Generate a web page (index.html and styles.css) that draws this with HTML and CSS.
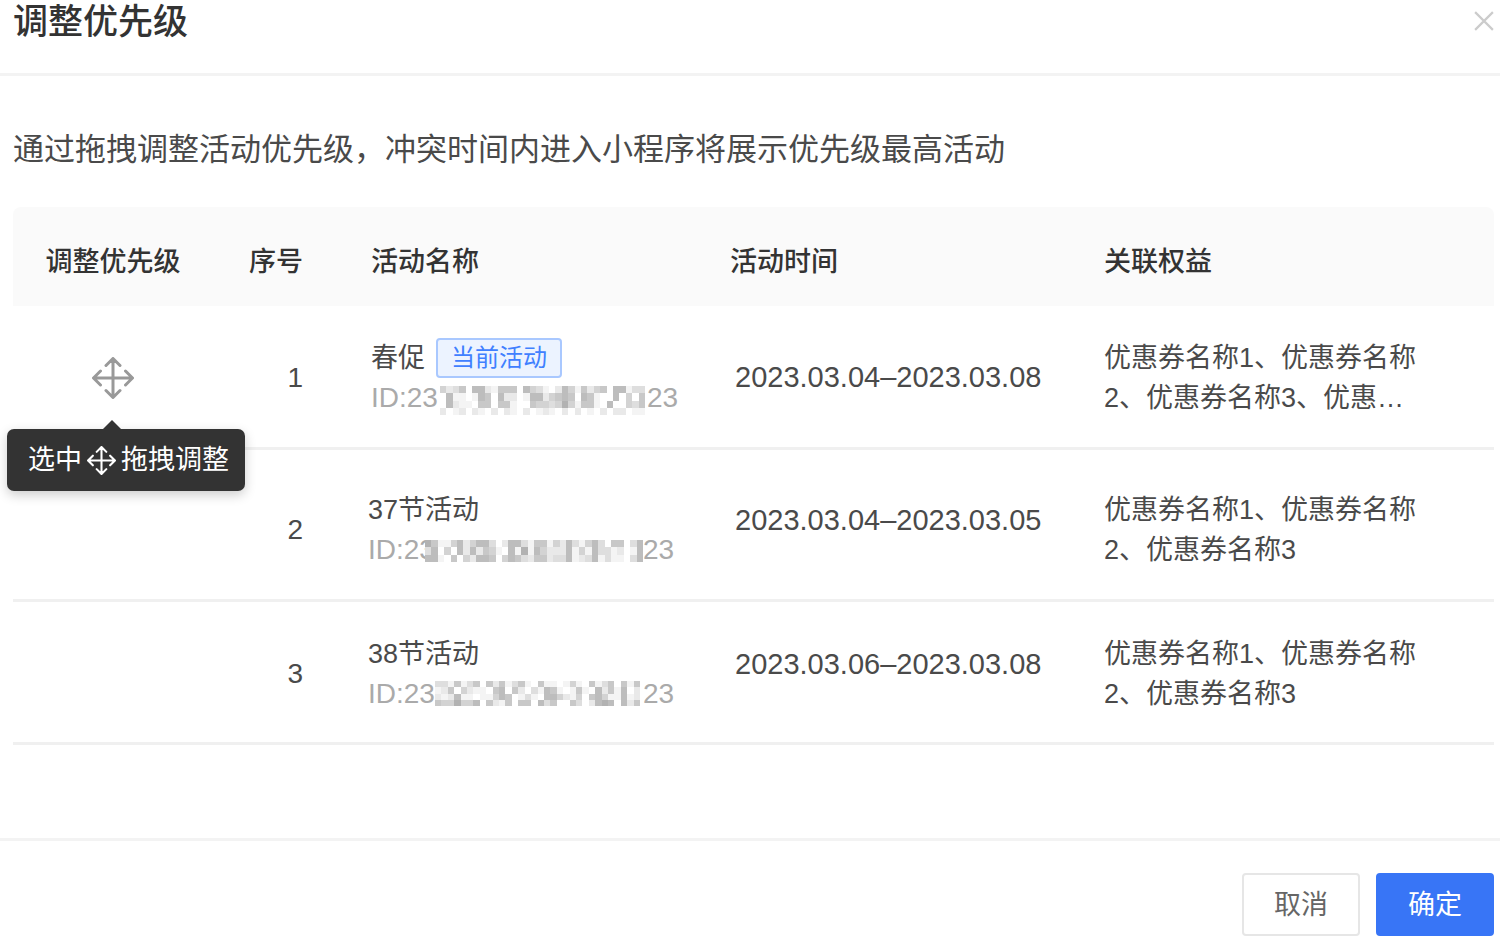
FILE: index.html
```html
<!DOCTYPE html>
<html lang="zh-CN">
<head>
<meta charset="utf-8">
<title>调整优先级</title>
<link rel="stylesheet" href="styles.css">
<script src="mosaic.js" defer></script>
</head>
<body>
<svg class="defs" aria-hidden="true">
  <symbol id="move" viewBox="0 0 42 42">
    <path d="M21 2v38M2 21h38M14 8.500l7-7 7 7M14 33.500l7 7 7-7M8.500 14l-7 7 7 7M33.500 14l7 7-7 7" fill="none" stroke="currentColor" stroke-linecap="round" stroke-linejoin="round"/>
  </symbol>
</svg>
<main class="dialog" role="dialog" aria-labelledby="title">
  <header class="dialog-header">
    <h1 id="title">调整优先级</h1>
    <button class="close" type="button" aria-label="关闭">
      <svg viewBox="0 0 18 18"><path d="M1 1l16 16M17 1L1 17" fill="none" stroke="currentColor" stroke-width="2"/></svg>
    </button>
  </header>
  <section class="dialog-body">
    <p class="hint">通过拖拽调整活动优先级，冲突时间内进入小程序将展示优先级最高活动</p>
    <table class="list">
      <colgroup><col class="c-move"><col class="c-no"><col class="c-name"><col class="c-time"><col class="c-benefit"></colgroup>
      <thead>
        <tr><th class="center" scope="col">调整优先级</th><th class="num" scope="col">序号</th><th scope="col">活动名称</th><th scope="col">活动时间</th><th scope="col">关联权益</th></tr>
      </thead>
      <tbody>
        <tr class="current">
          <td class="center">
            <div class="handle-wrap">
              <button class="handle" type="button" aria-label="拖拽调整" aria-describedby="tip"><svg><use href="#move"/></svg></button>
              <div class="tooltip" id="tip" role="tooltip">选中<svg><use href="#move"/></svg>拖拽调整</div>
            </div>
          </td>
          <td class="num">1</td>
          <td>
            <div class="name">春促<span class="tag">当前活动</span></div>
            <div class="id">ID:23<svg class="mosaic" data-rows="42350662155506431026415245066133 06110165062201662456506510060405 06211055055100544347415510600435 20120210202102012102020102022011"></svg>23</div>
          </td>
          <td class="time">2023.03.04–2023.03.08</td>
          <td class="benefit">优惠券名称1、优惠券名称<br>2、优惠券名称3、优惠…</td>
        </tr>
        <tr class="tall">
          <td></td>
          <td class="num">2</td>
          <td class="plain"><div class="name">37节活动</div><div class="id">ID:23<svg class="mosaic wide" data-rows="7511462466302663155142631463055036 3604062625410617164222614163312016 6610504266504653255233612361311036"></svg>23</div></td>
          <td class="time">2023.03.04–2023.03.05</td>
          <td class="benefit">优惠券名称1、优惠券名称<br>2、优惠券名称3</td>
        </tr>
        <tr class="last">
          <td></td>
          <td class="num">3</td>
          <td class="plain"><div class="name">38节活动</div><div class="id">ID:23<svg class="mosaic short" data-rows="33151350525135105110141051350515 12504211056052031651015106251602 21261101146501310664214056411612 54474460521505506350053026760625"></svg>23</div></td>
          <td class="time">2023.03.06–2023.03.08</td>
          <td class="benefit">优惠券名称1、优惠券名称<br>2、优惠券名称3</td>
        </tr>
      </tbody>
    </table>
  </section>
  <footer class="dialog-footer">
    <button class="btn" type="button">取消</button>
    <button class="btn primary" type="button">确定</button>
  </footer>
</main>
</body>
</html>
```
FILE: mosaic.js
```js
// Draws the mask over the middle of each ID: one digit per cell, 0 is white.
document.querySelectorAll(".mosaic").forEach((svg) => {
  const rows = svg.dataset.rows.split(" ");
  svg.setAttribute("viewBox", `0 0 ${rows[0].length} ${rows.length}`);
  svg.setAttribute("preserveAspectRatio", "none");
  svg.setAttribute("shape-rendering", "crispEdges");
  rows.forEach((row, y) => [...row].forEach((level, x) => {
    const cell = document.createElementNS("http://www.w3.org/2000/svg", "rect");
    const grey = 255 - level * 11;
    cell.setAttribute("x", x);
    cell.setAttribute("y", y);
    cell.setAttribute("width", 1);
    cell.setAttribute("height", 1);
    cell.setAttribute("fill", `rgb(${grey},${grey},${grey})`);
    svg.append(cell);
  }));
});
```
FILE: styles.css
```css
* { box-sizing: border-box; }
body { margin: 0; background: #fff; color: #4a4a4a; font-family: "Liberation Sans", "Noto Sans CJK SC", sans-serif; font-size: 27px; line-height: 40px; }
button { font: inherit; cursor: pointer; }
.defs { display: none; }
.dialog { display: flex; flex-direction: column; min-height: 100vh; }
.dialog-header { display: flex; justify-content: space-between; align-items: flex-start; height: 76px; padding: 0 6px 0 13px; border-bottom: 3px solid #f3f3f3; }
h1 { margin: 0; font-size: 35px; line-height: 44px; font-weight: 500; color: #333; }
.close { padding: 0; margin-top: 11px; border: 0; background: none; color: #ccc; line-height: 0; }
.close svg { width: 20px; height: 20px; }
.dialog-body { flex: 1; padding: 50px 6px 0 13px; }
.hint { margin: 0 0 33px; font-size: 31px; line-height: 48px; }
.list { width: 100%; table-layout: fixed; border-collapse: separate; border-spacing: 0; }
.c-move { width: 200px; }
.c-no { width: 128px; }
.c-name { width: 359px; }
.c-time { width: 374px; }
th { height: 99px; padding: 10px 0 0 30px; background: #fafafa; text-align: left; font-weight: 500; color: #333; }
th:first-child { border-top-left-radius: 8px; }
th:last-child { border-top-right-radius: 8px; }
td { height: 144px; padding: 3px 0 0 30px; border-bottom: 3px solid #f0f0f0; }
.center { text-align: center; padding-left: 0; }
.num { text-align: right; padding-left: 0; padding-right: 38px; }
td.num { font-size: 28px; }
.plain { padding-left: 27px; }
.name { display: flex; align-items: center; gap: 11px; }
.tag { padding: 0 13px; border: 2px solid #a9c8ff; border-radius: 4px; background: #ecf3ff; color: #4080ff; font-size: 24px; line-height: 36px; }
.id { display: flex; align-items: center; color: #aaa; font-size: 28px; }
.mosaic { width: 205px; height: 29px; margin: 4px 2px 0; }
.mosaic.wide { width: 218px; height: 22px; margin: 2px 0 0 -10px; }
.mosaic.short { width: 205px; height: 25px; margin: 0 3px 0 0; }
.time { padding-left: 35px; padding-top: 0; font-size: 29px; }
.tall td { height: 152px; padding-top: 11px; }
.tall .time { padding-top: 0; padding-bottom: 10px; }
.last td { height: 143px; }
.last .time { padding-bottom: 17px; }
.handle-wrap { position: relative; display: inline-block; vertical-align: middle; }
.handle { display: block; padding: 0; border: 0; background: none; color: #999; }
.handle svg { display: block; width: 42px; height: 42px; stroke-width: 3; }
.tooltip { position: absolute; top: 72px; left: -85px; display: flex; align-items: center; gap: 5px; padding: 11px 16px 11px 21px; border-radius: 7px; background: #333; color: #fff; white-space: nowrap; box-shadow: 0 4px 12px #0003; }
.tooltip::before { content: ""; position: absolute; top: -9px; left: 95px; border: 10px solid transparent; border-top: 0; border-bottom-color: #333; }
.tooltip svg { width: 29px; height: 29px; stroke-width: 3; }
.dialog-footer { display: flex; justify-content: flex-end; gap: 16px; padding: 32px 6px 7px; border-top: 3px solid #f3f3f3; }
.btn { width: 118px; height: 63px; border: 2px solid #e6e6e6; border-radius: 4px; background: #fff; color: #666; }
.primary { border-color: #3875f6; background: #3875f6; color: #fff; }
```
